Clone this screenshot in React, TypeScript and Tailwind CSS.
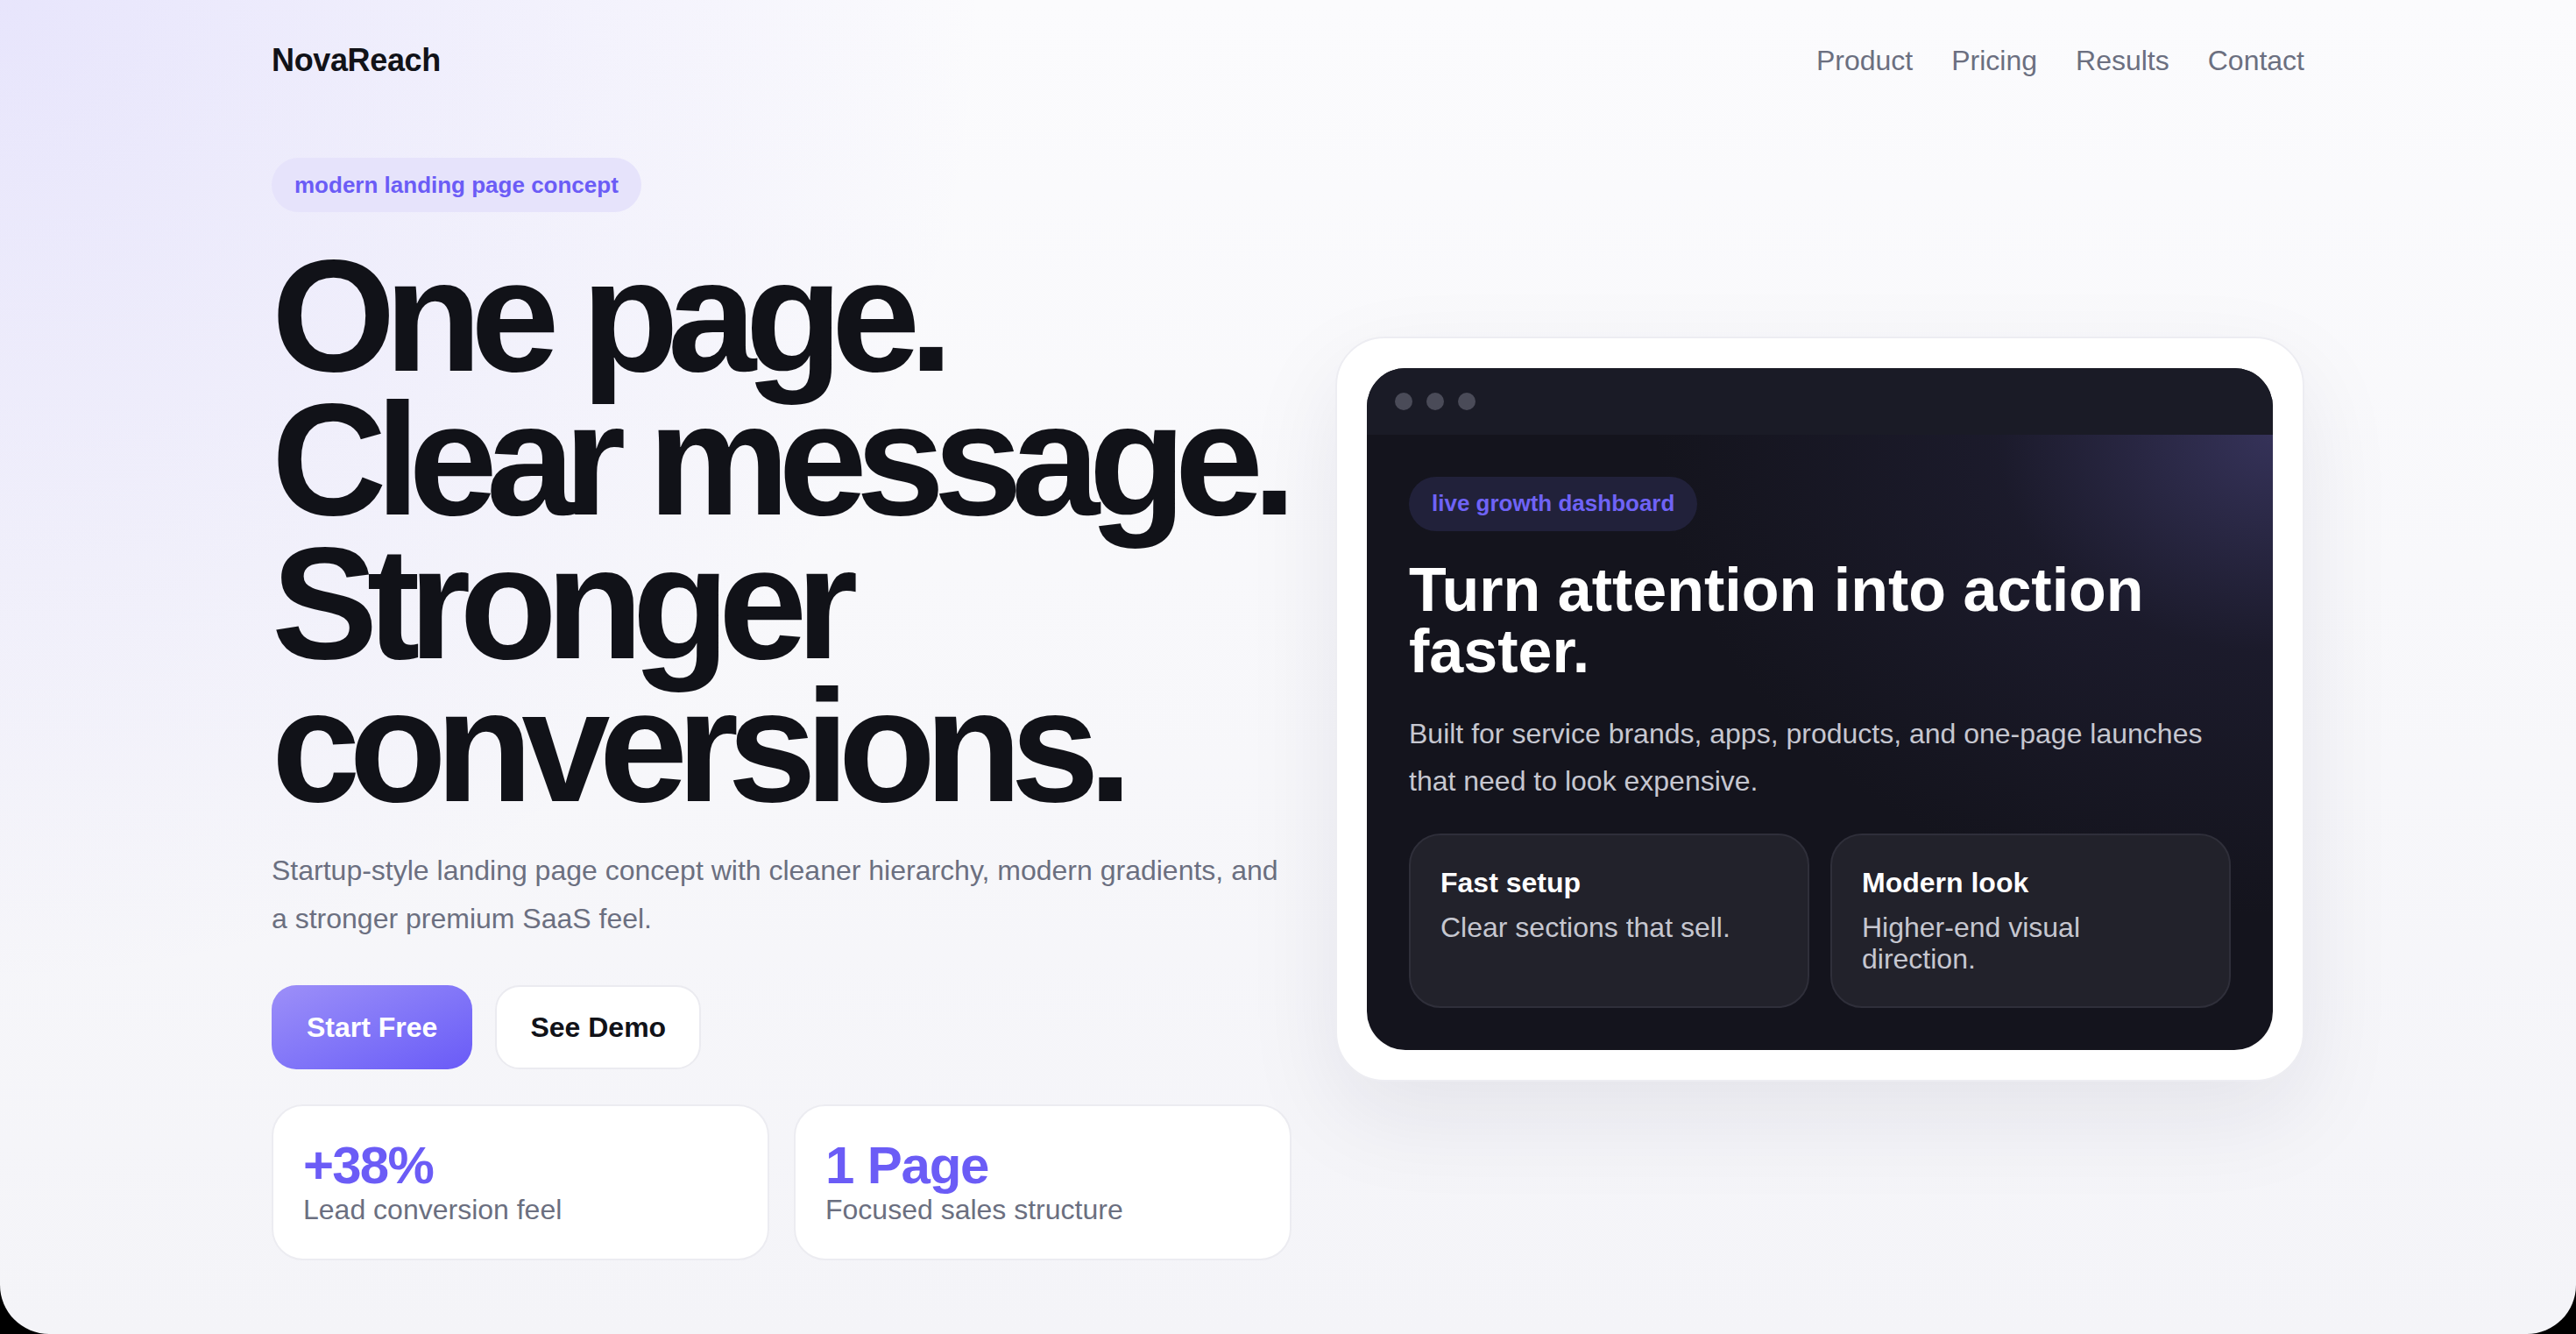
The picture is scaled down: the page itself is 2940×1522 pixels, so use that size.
export default function App() {
  const navLinks = ["Product", "Pricing", "Results", "Contact"];

  const stats = [
    { value: "+38%", label: "Lead conversion feel", tracking: "tracking-[-0.03em]" },
    { value: "1 Page", label: "Focused sales structure", tracking: "tracking-[-0.02em]" },
  ];

  const features = [
    { title: "Fast setup", text: "Clear sections that sell." },
    { title: "Modern look", text: "Higher-end visual direction." },
  ];

  return (
    <div className="min-h-screen bg-black font-['Liberation_Sans',Arial,sans-serif]">
      <div className="min-h-[1522px] overflow-hidden rounded-b-[56px] bg-[radial-gradient(circle_at_0%_0%,rgba(120,104,246,0.15),rgba(120,104,246,0)_34%),linear-gradient(180deg,#fbfbfd_0%,#f4f4f8_100%)]">
        <div className="mx-auto max-w-[2320px]">
          {/* nav */}
          <header className="flex h-[138px] items-center justify-between">
            <div className="text-[36px] font-bold tracking-[-0.01em] text-[#111218]">NovaReach</div>
            <nav className="flex gap-[44px] text-[32px] text-[#6b6f80]">
              {navLinks.map((l) => (
                <a key={l} href="#">
                  {l}
                </a>
              ))}
            </nav>
          </header>

          {/* hero */}
          <section className="grid grid-cols-[1164px_1fr] items-center gap-[50px] pt-[42px]">
            <div>
              <span className="inline-flex h-[62px] items-center rounded-full bg-[#e6e3fb] px-[26px] text-[26px] font-bold text-[#6b5cf6]">
                modern landing page concept
              </span>

              <h1 className="mt-[37px] text-[182px] font-bold leading-[0.9] tracking-[-0.07em] text-[#111218]">
                <span className="block whitespace-nowrap">One page.</span>
                <span className="block whitespace-nowrap">Clear message.</span>
                <span className="block whitespace-nowrap">Stronger</span>
                <span className="block whitespace-nowrap">conversions.</span>
              </h1>

              <p className="mt-[32px] max-w-[1160px] text-[32px] leading-[1.7] text-[#6b6f80]">
                Startup-style landing page concept with cleaner hierarchy, modern gradients, and a stronger premium SaaS feel.
              </p>

              <div className="mt-[49px] flex gap-[26px]">
                <button className="h-[96px] rounded-[28px] bg-gradient-to-br from-[#9d8ff8] to-[#6a5af7] px-[40px] text-[32px] font-bold text-white">
                  Start Free
                </button>
                <button className="h-[96px] rounded-[28px] border-2 border-[#ebebf0] bg-white px-[38px] text-[32px] font-bold text-[#111218]">
                  See Demo
                </button>
              </div>

              <div className="mt-[40px] grid grid-cols-2 gap-[28px]">
                {stats.map((s) => (
                  <div key={s.label} className="rounded-[36px] border-2 border-[#ececf1] bg-white px-[34px] pb-[34px] pt-[38px]">
                    <div className={`text-[60px] font-bold leading-none text-[#6b5cf6] ${s.tracking}`}>{s.value}</div>
                    <div className="text-[32px] leading-[1.3] text-[#6b6f80]">{s.label}</div>
                  </div>
                ))}
              </div>
            </div>

            {/* preview card */}
            <div className="rounded-[56px] border-2 border-[#ededf2] bg-white p-[34px] shadow-[0_40px_110px_rgba(24,24,60,0.08)]">
              <div className="overflow-hidden rounded-[44px] bg-[#14141d]">
                <div className="flex h-[76px] items-center gap-4 bg-[#1a1b26] px-8">
                  <span className="h-5 w-5 rounded-full bg-[#4a4b58]" />
                  <span className="h-5 w-5 rounded-full bg-[#4a4b58]" />
                  <span className="h-5 w-5 rounded-full bg-[#4a4b58]" />
                </div>

                <div className="bg-[radial-gradient(ellipse_68%_78%_at_100%_0%,rgba(66,62,112,0.72)_0%,rgba(38,36,64,0.4)_45%,rgba(20,20,29,0)_100%)] px-[48px] pb-[48px] pt-[48px]">
                  <span className="inline-flex h-[62px] items-center rounded-full bg-[#21213a] px-[26px] text-[26px] font-bold text-[#6f63f6]">
                    live growth dashboard
                  </span>

                  <h2 className="mt-8 text-[70px] font-bold leading-none text-white">Turn attention into action faster.</h2>

                  <p className="mt-[32px] text-[32px] leading-[1.7] text-[#c6c7d0]">
                    Built for service brands, apps, products, and one-page launches that need to look expensive.
                  </p>

                  <div className="mt-8 grid grid-cols-2 gap-6">
                    {features.map((f) => (
                      <div key={f.title} className="rounded-[36px] border-2 border-[#2f2f3a] bg-[#22222b] px-[34px] py-[36px]">
                        <div className="text-[32px] font-bold leading-[1.15] text-white">{f.title}</div>
                        <div className="mt-4 text-[32px] leading-[1.1] text-[#c6c7d0]">{f.text}</div>
                      </div>
                    ))}
                  </div>
                </div>
              </div>
            </div>
          </section>
        </div>
      </div>
    </div>
  );
}
